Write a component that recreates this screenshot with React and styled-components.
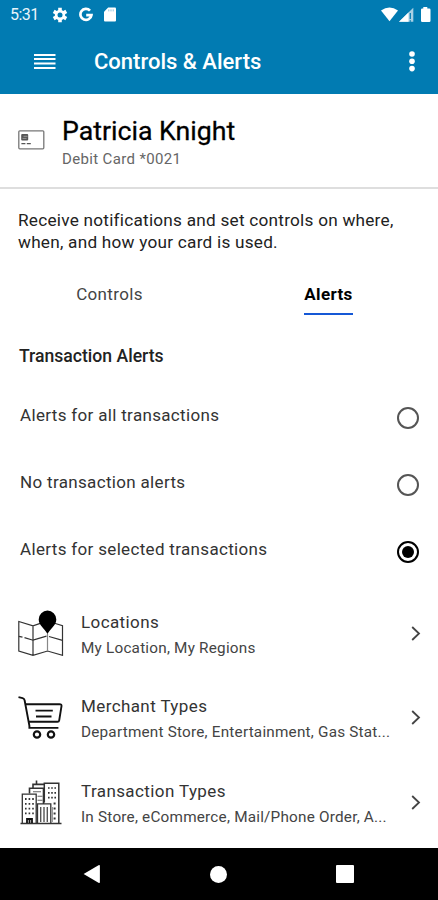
import React, { useState } from 'react'
import styled, { createGlobalStyle } from 'styled-components'

const GlobalStyle = createGlobalStyle`
  * {
    box-sizing: border-box;
  }

  body {
    margin: 0;
    background: #fff;
    font-family: Roboto, 'Liberation Sans', sans-serif;
  }
`

const alertOptions = [
  'Alerts for all transactions',
  'No transaction alerts',
  'Alerts for selected transactions',
]

const GearIcon = () => (
  <svg width="16" height="16" viewBox="0 0 16 16">
    <g stroke="#fff" strokeWidth="3.6">
      <path d="M8 .7v14.6M1.7 4.35l12.6 7.3M1.7 11.65l12.6-7.3" />
    </g>
    <circle cx="8" cy="8" r="5.2" fill="#fff" />
    <circle cx="8" cy="8" r="2.5" fill="#017bb2" />
  </svg>
)

const GoogleIcon = () => (
  <svg width="14" height="15" viewBox="0 0 14 15">
    <path
      d="M11 3.7A5.5 5.5 0 1 0 12.4 8.2H7.2"
      fill="none"
      stroke="#fff"
      strokeWidth="2.7"
    />
  </svg>
)

const SdCardIcon = () => (
  <svg width="12" height="15" viewBox="0 0 12 15">
    <path d="M4.2.4H11q1 0 1 1v12.2q0 1-1 1H1q-1 0-1-1V4.8z" fill="#fff" />
    <path d="M4.8 2.4v2M7 2.4v2M9.2 2.4v2" stroke="#8fc3dd" strokeWidth="1" />
  </svg>
)

const SignalIcons = () => (
  <svg width="50" height="16" viewBox="0 0 50 16">
    <path d="M0 3.6Q8.5-2.4 17 3.6L8.5 14.2z" fill="#fff" />
    <path d="M32.3.8v14H18z" fill="#a9d0e4" />
    <path d="M27.5 5.5v9.3H18z" fill="#fff" />
    <path d="M29.3 6v6M29.3 13.2v1.6" stroke="#017bb2" strokeWidth="1.2" />
    <path
      d="M42.3 0h4v1.5h2q1.2 0 1.2 1.2v11q0 1.2-1.2 1.2h-7.1q-1.2 0-1.2-1.2v-11q0-1.2 1.2-1.2h1.1z"
      fill="#fff"
    />
  </svg>
)

const MenuIcon = () => (
  <svg width="22" height="16" viewBox="0 0 22 16">
    <path
      d="M0 1h21.5M0 5h21.5M0 9.5h21.5M0 14h21.5"
      stroke="#fff"
      strokeWidth="2"
    />
  </svg>
)

const MoreIcon = () => (
  <svg width="6" height="22" viewBox="0 0 6 22" fill="#fff">
    <circle cx="3" cy="3" r="2.8" />
    <circle cx="3" cy="10.3" r="2.8" />
    <circle cx="3" cy="17.6" r="2.8" />
  </svg>
)

const CardIcon = () => (
  <svg width="27" height="20" viewBox="0 0 27 20">
    <rect x=".8" y=".8" width="25" height="18" rx="1" fill="none" stroke="#777" strokeWidth="1.3" />
    <rect x="3.2" y="4" width="7" height="6.4" rx="1" fill="#555" />
    <path d="M5.5 6.3h4M4.5 8.4h4" stroke="#aaa" strokeWidth=".8" />
    <path d="M3.4 13.6h4M8.8 13.6h4" stroke="#555" strokeWidth="1.2" />
  </svg>
)

const MapIcon = () => (
  <svg width="46" height="46" viewBox="0 0 46 46">
    <g fill="none" stroke="#333" strokeWidth="1.2">
      <path d="M23 13.1l-8 2.7L.8 11.5V41L15 45.3 29.5 41l15 4.3V15.7l-8-2.5M15 15.8v29.5" />
      <path d="M29.5 24v17" stroke="#888" />
      <path d="M.8 26.4l3.7.8M6.5 27.6 15 30.2l13.5-4M31 26.5l13.5 3.8" />
    </g>
    <path
      d="M29.5 24C27.5 19.5 20.7 15.4 20.7 9.4a8.8 8.8 0 0 1 17.6 0c0 6-6.8 10.1-8.8 14.6z"
      fill="#000"
    />
  </svg>
)

const CartIcon = () => (
  <svg width="46" height="44" viewBox="0 0 46 44" fill="none" stroke="#111">
    <path d="M.5 2.2 4.6 3.2q1.6.4 2 2l4.8 25.6v2.1h29" strokeWidth="1.9" />
    <path d="M7.5 9.2h34q2.3 0 2 2L41.2 25.4q-.2 1.4-1.7 1.4H11" strokeWidth="1.9" />
    <path d="M17.5 15.7h17.3M18 21.5h15.5" strokeWidth="1.8" />
    <circle cx="19" cy="39.5" r="3.2" strokeWidth="2.2" />
    <circle cx="33" cy="39.5" r="3.2" strokeWidth="2.2" />
  </svg>
)

const BuildingsIcon = () => (
  <svg width="42" height="46" viewBox="0 0 42 46" fill="none" stroke="#333">
    <path d="M.5 44.5h41" strokeWidth="1.4" />
    <path d="M2.3 44V15.2h13.9V44" strokeWidth="1.3" />
    <path d="M9.5 14.5V9.2h14V25M13 8.8V5.4h11M16.5 5V1.5" strokeWidth="1.6" />
    <path d="M24.3 23.5V4.2h14.5V44" strokeWidth="1.5" />
    <path d="M17.5 44V24.8h13.3V44" strokeWidth="1.3" />
    <path d="M20.7 28v15M24 28v15M27.3 28v15" strokeWidth="1.4" stroke="#555" />
    <path d="M32.5 28v15" strokeWidth="1" stroke="#999" />
    <path d="M5 20h9M5 24.8h9M5 29.6h9M5 34.4h9" strokeWidth="1.8" strokeDasharray="1.6 2" />
    <path d="M28 9h8M28 13.8h8M28 18.6h8" strokeWidth="1.7" strokeDasharray="1.6 1.6" />
    <path d="M34.6 23.5v19" strokeWidth="2" strokeDasharray="2 3" />
    <path d="M13 12.7h8M17.5 17.3h5M17.5 21.2h5" strokeWidth="1.1" stroke="#666" />
    <path d="M7 44v-4h5v4M9.5 40v4" strokeWidth="1.8" stroke="#111" />
  </svg>
)

const ChevronIcon = () => (
  <svg width="10" height="16" viewBox="0 0 10 16">
    <path d="M1.2 2 8 8.5 1.2 15" fill="none" stroke="#444" strokeWidth="1.8" />
  </svg>
)

const categories = [
  { title: 'Locations', detail: 'My Location, My Regions', Icon: MapIcon },
  {
    title: 'Merchant Types',
    detail: 'Department Store, Entertainment, Gas Stat...',
    Icon: CartIcon,
  },
  {
    title: 'Transaction Types',
    detail: 'In Store, eCommerce, Mail/Phone Order, A...',
    Icon: BuildingsIcon,
  },
]

const App = () => {
  const [tab, setTab] = useState('Alerts')
  const [selected, setSelected] = useState(2)

  return (
    <Screen>
      <GlobalStyle />
      <StatusBar>
        <Clock>5:31</Clock>
        <GearIcon />
        <GoogleIcon />
        <SdCardIcon />
        <Spacer />
        <SignalIcons />
      </StatusBar>
      <AppBar>
        <IconButton aria-label="Menu">
          <MenuIcon />
        </IconButton>
        <Title>Controls &amp; Alerts</Title>
        <IconButton aria-label="More">
          <MoreIcon />
        </IconButton>
      </AppBar>
      <CardHeader>
        <CardIcon />
        <div>
          <CardHolder>Patricia Knight</CardHolder>
          <CardNumber>Debit Card *0021</CardNumber>
        </div>
      </CardHeader>
      <Intro>
        Receive notifications and set controls on where,
        <br />
        when, and how your card is used.
      </Intro>
      <Tabs>
        {['Controls', 'Alerts'].map((name) => (
          <Tab key={name} $active={tab === name} onClick={() => setTab(name)}>
            {name}
          </Tab>
        ))}
      </Tabs>
      <SectionTitle>Transaction Alerts</SectionTitle>
      {alertOptions.map((label, i) => (
        <Option key={label} onClick={() => setSelected(i)}>
          <OptionLabel>{label}</OptionLabel>
          <Radio $checked={selected === i} />
        </Option>
      ))}
      <List>
        {categories.map(({ title, detail, Icon }) => (
          <Row key={title}>
            <RowIcon>
              <Icon />
            </RowIcon>
            <RowText>
              <RowTitle>{title}</RowTitle>
              <RowDetail>{detail}</RowDetail>
            </RowText>
            <ChevronIcon />
          </Row>
        ))}
      </List>
      <NavBar>
        <svg width="18" height="20" viewBox="0 0 18 20">
          <path d="M.6 10 15.5 1.3q1.4-.6 1.4.8v15.8q0 1.4-1.4.8z" fill="#fff" />
        </svg>
        <HomeButton />
        <RecentsButton />
      </NavBar>
    </Screen>
  )
}

const Screen = styled.div`
  display: flex;
  flex-direction: column;
  width: 438px;
  height: 900px;
  overflow: hidden;
  background: #fff;
  color: #222;
`

const StatusBar = styled.div`
  display: flex;
  align-items: center;
  flex: none;
  height: 29px;
  padding: 0 7px 0 10px;
  background: #017bb2;

  svg + svg {
    margin-left: 11px;
  }
`

const Clock = styled.span`
  width: 42px;
  font-size: 16px;
  letter-spacing: -0.5px;
  color: #e8f4fa;
`

const Spacer = styled.div`
  flex: 1;
`

const AppBar = styled.header`
  display: flex;
  align-items: center;
  flex: none;
  height: 65px;
  padding: 0 23px 0 34px;
  background: #017bb2;
`

const IconButton = styled.button`
  display: flex;
  padding: 0;
  border: 0;
  background: none;
`

const Title = styled.h1`
  flex: 1;
  margin: 0 0 0 38px;
  font-size: 22px;
  font-weight: 500;
  color: #fff;
`

const CardHeader = styled.section`
  display: flex;
  gap: 17px;
  flex: none;
  height: 95px;
  padding: 20px 18px 0;
  border-bottom: 2px solid #dedede;

  svg {
    margin-top: 16px;
  }
`

const CardHolder = styled.h2`
  margin: 0;
  font-size: 26.7px;
  font-weight: 400;
  line-height: 34px;
  color: #000;
  -webkit-text-stroke: 0.3px #000;
`

const CardNumber = styled.div`
  font-size: 15px;
  line-height: 22px;
  letter-spacing: 0.35px;
  color: #666;
`

const Intro = styled.p`
  flex: none;
  height: 64px;
  margin: 0;
  padding: 21px 18px 0;
  font-size: 17.2px;
  line-height: 21.5px;
  letter-spacing: 0.24px;
  white-space: nowrap;
`

const Tabs = styled.div`
  display: grid;
  grid-template-columns: 1fr 1fr;
  justify-items: center;
  flex: none;
  height: 62px;
  padding-top: 30px;
`

const Tab = styled.button`
  height: 32px;
  padding: 2px 0 9px;
  border: 0;
  border-bottom: 2px solid ${({ $active }) => ($active ? '#1558d6' : 'transparent')};
  background: none;
  font-family: inherit;
  font-size: 17px;
  font-weight: ${({ $active }) => ($active ? 700 : 400)};
  letter-spacing: 0.35px;
  line-height: 19px;
  color: ${({ $active }) => ($active ? '#000' : '#444')};
`

const SectionTitle = styled.h3`
  flex: none;
  height: 67px;
  margin: 0;
  padding: 31px 19px 0;
  font-size: 17.6px;
  font-weight: 500;
  line-height: 20px;
  color: #222;
`

const Option = styled.label`
  display: flex;
  align-items: center;
  justify-content: space-between;
  flex: none;
  height: 67px;
  padding: 5px 19px 0 20px;
`

const OptionLabel = styled.span`
  padding-bottom: 7px;
  font-size: 17px;
  letter-spacing: 0.33px;
  color: #333;
`

const Radio = styled.span`
  display: grid;
  place-items: center;
  width: 22px;
  height: 22px;
  border: 2px solid ${({ $checked }) => ($checked ? '#000' : '#555')};
  border-radius: 50%;

  &::after {
    content: '';
    width: 12px;
    height: 12px;
    border-radius: 50%;
    background: ${({ $checked }) => ($checked ? '#000' : 'transparent')};
  }
`

const List = styled.div`
  flex: 1;
  padding-top: 8px;
`

const Row = styled.div`
  display: flex;
  align-items: center;
  height: 84.3px;
  padding: 0 17px 0 18px;
`

const RowIcon = styled.div`
  display: flex;
  justify-content: center;
  width: 46px;
  margin-right: 17px;
`

const RowText = styled.div`
  flex: none;
  width: 311px;
  margin-right: 19px;
  padding-top: 4px;
`

const RowTitle = styled.div`
  font-size: 17px;
  line-height: 26px;
  letter-spacing: 0.4px;
  color: #333;
`

const RowDetail = styled.div`
  font-size: 15.3px;
  line-height: 26px;
  letter-spacing: 0.21px;
  white-space: nowrap;
  color: #444;
`

const NavBar = styled.nav`
  display: flex;
  align-items: center;
  justify-content: space-between;
  flex: none;
  height: 52px;
  padding: 0 84px 0 83px;
  background: #000;
`

const HomeButton = styled.span`
  width: 17px;
  height: 17px;
  border-radius: 50%;
  background: #fff;
`

const RecentsButton = styled.span`
  width: 18px;
  height: 18px;
  border-radius: 1px;
  background: #fff;
`

export default App
